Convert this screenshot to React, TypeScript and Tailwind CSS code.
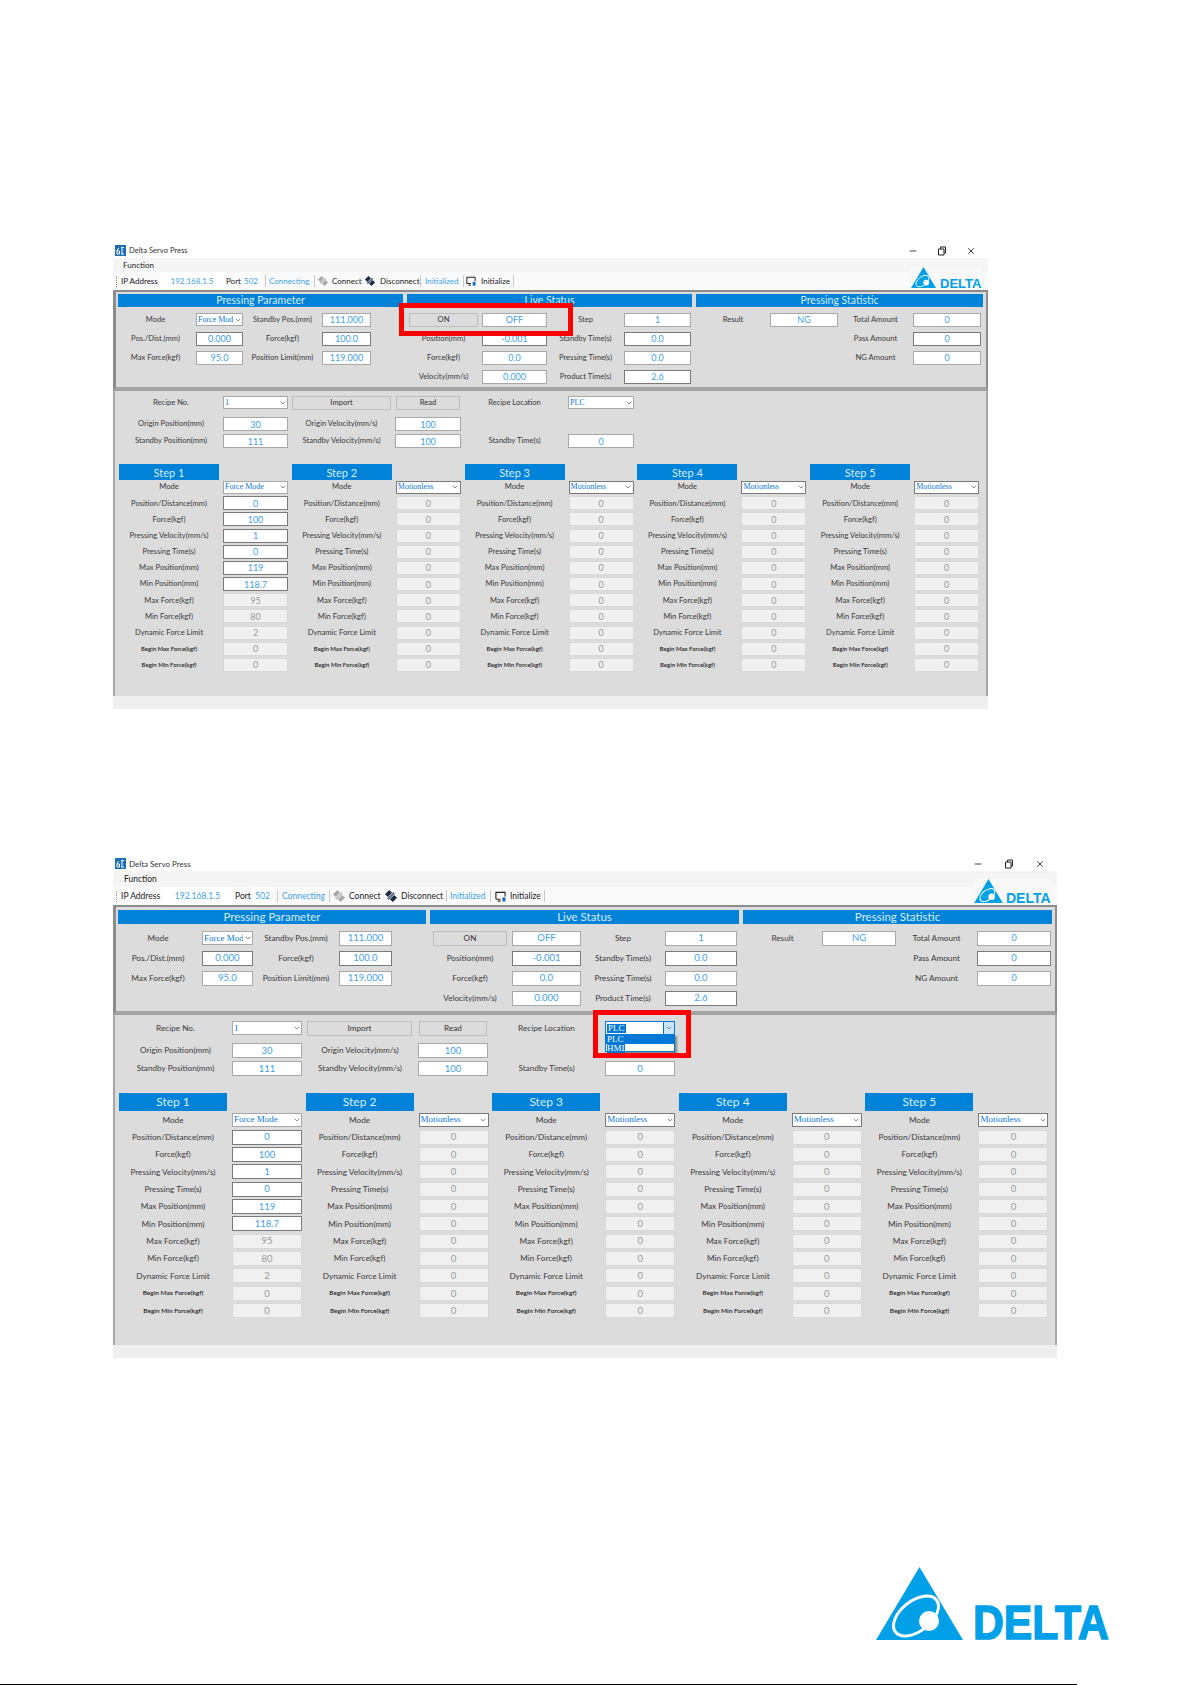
import React from 'react';
import { ChevronDown, Minus, X } from 'lucide-react';

const SM = {
  win: 'w-[875px]',
  title: 'h-[15px] text-[7.6px]',
  controls: 'gap-[19px]',
  menu: 'h-[14px] pl-[10px] text-[8px]',
  bar: 'h-[18px] text-[8px]',
  ipLabel: 'w-[39px]',
  ipBox: 'w-[64px]',
  portLabel: 'w-[19px] pl-[2px]',
  portBox: 'w-[16px]',
  sep0: 'ml-[6px]',
  connecting: 'w-[48px] pl-[3px]',
  icon1: 'ml-[3px] w-[10px] h-[10px]',
  connect: 'w-[37px] pl-[4px]',
  icon2: 'w-[10px] h-[10px]',
  disconnect: 'w-[45px] pl-[5px]',
  initialized: 'w-[42px] pl-[4px]',
  icon3: 'ml-[2px] w-[10px] h-[10px]',
  initialize: 'w-[37px] pl-[5px]',
  logo: 'right-[6px] top-[24px] bg-[#f8f8f8]',
  logoTri: 'w-[27px] h-[21px]',
  logoText: 'text-[13px] w-[42px] ml-[3px] h-[10px]',
  top: 'h-[101px] pt-[2px]',
  groups: 'gap-[4px]',
  g1: 'w-[285px]',
  g2: 'w-[285px]',
  g3: 'w-[287px]',
  head: 'h-[13px] text-[10.5px]',
  topRows: 'auto-rows-[19px] pt-[3px]',
  g1Cols: 'grid-cols-[78px_47px_79px_49px]',
  g2Cols: 'pl-[2px] grid-cols-[73px_65px_77px_67px]',
  g3Cols: 'grid-cols-[74px_68px_75px_68px]',
  g1Pad: 'pr-[3px]',
  g2Pad: 'pr-[4px]',
  onBtn: 'w-[69px]',
  lower: 'h-[305px] pt-[5px]',
  recipe: 'grid-cols-[104px_65px_107px_66px_107px_66px] grid-rows-[21px_17px_15px] mb-[15px]',
  importBtn: 'ml-[4px] mr-[4px]',
  readBtn: 'mx-[1px]',
  steps: 'w-[864px]',
  stepHead: 'w-[100px] h-[16px] text-[11px] -mb-[1px]',
  stepCols: 'grid-cols-[104px_65px] auto-rows-[16.18px]',
  stepLabel: 'pr-[4px]',
  label: 'text-[7.6px]',
  tiny: 'text-[6px]',
  value: 'text-[9px]',
  field: 'h-[14px]',
  select: 'h-[13px] text-[8px]',
  red: 'left-[286px] top-[60px] w-[174px] h-[33px]',
};

const LG: typeof SM = {
  win: 'w-[944px]',
  title: 'h-[15px] text-[8px]',
  controls: 'gap-[21px]',
  menu: 'h-[16px] pl-[11px] text-[8.5px]',
  bar: 'h-[18px] text-[8.5px]',
  ipLabel: 'w-[42px]',
  ipBox: 'w-[69px]',
  portLabel: 'w-[21px] pl-[3px]',
  portBox: 'w-[19px]',
  sep0: 'ml-[5px]',
  connecting: 'w-[51px] pl-[4px]',
  icon1: 'ml-[3px] w-[12px] h-[12px]',
  connect: 'w-[40px] pl-[4px]',
  icon2: 'w-[12px] h-[12px]',
  disconnect: 'w-[49px] pl-[4px]',
  initialized: 'w-[43px] pl-[3px]',
  icon3: 'ml-[4px] w-[11px] h-[11px]',
  initialize: 'w-[38px] pl-[4px]',
  logo: 'right-[5px] top-[23px] bg-[#f8f8f8]',
  logoTri: 'w-[29px] h-[24px]',
  logoText: 'text-[14px] w-[46px] ml-[3px] h-[11px]',
  top: 'h-[110px] pt-[3px]',
  groups: 'gap-[4px]',
  g1: 'w-[308px]',
  g2: 'w-[309px]',
  g3: 'w-[309px]',
  head: 'h-[14px] text-[11.5px]',
  topRows: 'auto-rows-[20px] pt-[4px]',
  g1Cols: 'grid-cols-[84px_51px_86px_53px]',
  g2Cols: 'pl-[3px] grid-cols-[79px_69px_84px_72px]',
  g3Cols: 'grid-cols-[79px_74px_81px_74px]',
  g1Pad: 'pr-[4px]',
  g2Pad: 'pr-[5px]',
  onBtn: 'w-[74px]',
  lower: 'h-[330px] pt-[6px]',
  recipe: 'grid-cols-[113px_70px_116px_70px_117px_70px] grid-rows-[22px_18px_16px] mb-[16px]',
  importBtn: 'ml-[5px] mr-[6px]',
  readBtn: 'mx-[1px]',
  steps: 'w-[933px]',
  stepHead: 'w-[108px] h-[18px] text-[12px] mb-0',
  stepCols: 'grid-cols-[113px_70px] auto-rows-[17.36px]',
  stepLabel: 'pr-[5px]',
  label: 'text-[8.2px]',
  tiny: 'text-[6.5px]',
  value: 'text-[9.5px]',
  field: 'h-[15px]',
  select: 'h-[14px] text-[9px]',
  red: 'left-[480px] top-[154px] w-[98px] h-[48px]',
};

type Size = typeof SM;

const STEP_LABELS = [
  'Position/Distance(mm)',
  'Force(kgf)',
  'Pressing Velocity(mm/s)',
  'Pressing Time(s)',
  'Max Position(mm)',
  'Min Position(mm)',
  'Max Force(kgf)',
  'Min Force(kgf)',
  'Dynamic Force Limit',
  'Begin Max Force(kgf)',
  'Begin Min Force(kgf)',
];
const STEP1_VALUES = ['0', '100', '1', '0', '119', '118.7', '95', '80', '2', '0', '0'];

const Triangle = ({ className }: { className: string }) => (
  <svg viewBox="0 0 87 73" className={className}>
    <path d="M43.5 0 87 73H0Z" fill="#00a0e9" />
    <ellipse cx="40" cy="49" rx="26" ry="15" transform="rotate(-38 40 49)" fill="none" stroke="#fff" strokeWidth="3" />
    <circle cx="53" cy="54" r="10" fill="#fff" />
  </svg>
);

const AppIcon = () => (
  <svg viewBox="0 0 11 11" className="w-[11px] h-[11px] shrink-0">
    <rect width="11" height="11" fill="#1c6fb8" />
    <path d="M2 9V5l2-2M2 6h2.5v3H2M6 9h3M6 2.5h3M7 2.5V9" stroke="#fff" strokeWidth="1" fill="none" />
  </svg>
);

const PlugIcon = ({ className, color }: { className: string; color: string }) => (
  <svg viewBox="0 0 12 12" className={`${className} shrink-0`}>
    <g transform="rotate(-45 6 6)" fill={color}>
      <rect x="3" y="0.5" width="6" height="4" />
      <rect x="3" y="7.5" width="6" height="4" />
      <rect x="1.5" y="5" width="9" height="2" opacity="0.7" />
    </g>
  </svg>
);

const ScreenIcon = ({ className }: { className: string }) => (
  <svg viewBox="0 0 12 12" className={`${className} shrink-0`}>
    <path d="M1 9V1.5h10V6M1 9h5M3 11h3" stroke="#222" strokeWidth="1.2" fill="none" />
    <rect x="8" y="7" width="3.5" height="4.5" fill="#1c6fb8" />
  </svg>
);

const Restore = () => (
  <svg viewBox="0 0 10 10" className="w-[10px] h-[10px]">
    <path d="M1.5 3h5.5v6H1.5zM3.5 3V1h5v6H7" fill="none" stroke="#222" strokeWidth="1" />
  </svg>
);

const Sep = ({ className = '' }: { className?: string }) => <span className={`w-px h-[12px] bg-[#c8c8c8] shrink-0 ${className}`} />;

const Label = ({ s, children, className = '', tiny = false }: { s: Size; children: React.ReactNode; className?: string; tiny?: boolean }) => (
  <span className={`text-center whitespace-nowrap ${tiny ? `${s.tiny} text-[#222] font-semibold` : `${s.label} text-[#3a3a3a]`} ${className}`}>{children}</span>
);

const Field = ({ s, value, dark = false, disabled = false }: { s: Size; value: string; dark?: boolean; disabled?: boolean }) => (
  <div
    className={`${s.field} ${s.value} flex items-center justify-center border leading-none ${
      disabled ? 'bg-[#f0f0f0] border-[#d8d8d8] text-[#9a9a9a]' : `bg-white text-[#3f9fe8] ${dark ? 'border-[#7a7a7a]' : 'border-[#a8a8a8]'}`
    }`}
  >
    {value}
  </div>
);

const Select = ({ s, value, dark = false, open = false }: { s: Size; value: string; dark?: boolean; open?: boolean }) => (
  <div
    className={`${s.select} relative flex items-center bg-white border font-['Liberation_Serif',serif] text-[#0a78d6] ${
      open ? 'border-[#0078d7]' : dark ? 'border-[#7a7a7a]' : 'border-[#a8a8a8]'
    }`}
  >
    <span className="flex-1 min-w-0 overflow-hidden whitespace-nowrap pl-[1px] leading-none">
      {open ? <span className="bg-[#0078d7] text-white px-[1px]">{value}</span> : value}
    </span>
    <span className={`flex items-center justify-center h-full shrink-0 ${open ? 'w-[11px] bg-[#cce4f7] border-l border-[#0078d7]' : 'w-[9px]'}`}>
      <ChevronDown size={8} color="#555" />
    </span>
    {open && (
      <div className="absolute left-[-1px] right-[-1px] top-full h-[18px] bg-white border border-[#0078d7] shadow-[2px_2px_2px_rgba(0,0,0,0.4)] leading-none z-10">
        <div className="h-[9px] bg-[#0078d7] text-white pl-[1px]">PLC</div>
        <div className="pl-[1px]">
          <span className="bg-[#0078d7] text-white">HMI</span>
        </div>
      </div>
    )}
  </div>
);

const Btn = ({ s, children, className = '' }: { s: Size; children: React.ReactNode; className?: string }) => (
  <div className={`${s.field} ${s.label} flex items-center justify-center bg-[#dcdcdc] border border-[#bcbcbc] text-[#333] ${className}`}>{children}</div>
);

const Head = ({ s, children, className = '' }: { s: Size; children: React.ReactNode; className?: string }) => (
  <div className={`${s.head} flex items-center justify-center bg-[#0082d9] text-[#d8eefc] leading-none ${className}`}>{children}</div>
);

const RecipeLabel = ({ s, children }: { s: Size; children: React.ReactNode }) => (
  <Label s={s} className={`${s.field} flex items-center justify-center`}>{children}</Label>
);

const Step = ({ s, n, mode }: { s: Size; n: number; mode: string }) => (
  <div>
    <Head s={s} className={s.stepHead}>{`Step ${n}`}</Head>
    <div className={`grid items-center ${s.stepCols}`}>
      <Label s={s} className={s.stepLabel}>Mode</Label>
      <Select s={s} value={mode} dark={n > 1} />
      {STEP_LABELS.map((label, i) => (
        <React.Fragment key={label}>
          <Label s={s} tiny={i > 8} className={s.stepLabel}>{label}</Label>
          {n === 1 ? (
            <Field s={s} value={STEP1_VALUES[i]} dark={i < 6} disabled={i >= 6} />
          ) : (
            <Field s={s} value="0" disabled />
          )}
        </React.Fragment>
      ))}
    </div>
  </div>
);

const Window = ({ s, open = false }: { s: Size; open?: boolean }) => (
  <div className={`${s.win} relative ml-[113px] font-['Lato',sans-serif]`}>
    {/* Title bar */}
    <div className={`${s.title} flex items-center justify-between bg-white pl-[2px] pr-[12px] text-[#333]`}>
      <div className="flex items-center gap-[3px]">
        <AppIcon />
        <span>Delta Servo Press</span>
      </div>
      <div className={`flex items-center ${s.controls}`}>
        <Minus size={10} color="#222" />
        <Restore />
        <X size={10} color="#222" />
      </div>
    </div>

    <div className={`${s.menu} flex items-center bg-[#f5f5f5] text-[#222]`}>Function</div>

    {/* Toolbar */}
    <div className={`${s.bar} flex items-center bg-[#fafafa] text-[#222] whitespace-nowrap`}>
      <span className="ml-[3px] mr-[4px] h-[11px] border-l border-dotted border-[#888]" />
      <span className={s.ipLabel}>IP Address</span>
      <span className={`${s.ipBox} h-full flex items-center justify-center bg-white text-[#3f9fe8]`}>192.168.1.5</span>
      <span className={s.portLabel}>Port</span>
      <span className={`${s.portBox} h-full flex items-center justify-center bg-white text-[#3f9fe8]`}>502</span>
      <Sep className={s.sep0} />
      <span className={`${s.connecting} text-[#3f9fe8]`}>Connecting</span>
      <Sep />
      <PlugIcon className={s.icon1} color="#a8a8a8" />
      <span className={s.connect}>Connect</span>
      <PlugIcon className={s.icon2} color="#1a2a44" />
      <span className={s.disconnect}>Disconnect</span>
      <Sep />
      <span className={`${s.initialized} text-[#3f9fe8]`}>Initialized</span>
      <Sep />
      <ScreenIcon className={s.icon3} />
      <span className={s.initialize}>Initialize</span>
      <Sep />
    </div>

    <div className={`${s.logo} absolute flex items-end`}>
      <Triangle className={s.logoTri} />
      <span className={`${s.logoText} flex items-center font-['Liberation_Sans',sans-serif] font-bold text-[#00a0e9] leading-none`}>DELTA</span>
    </div>

    {/* Pressing parameter / live status / statistic */}
    <div className={`${s.top} bg-[#dcdcdc] border-l-[3px] border-r-[2px] border-t-2 border-b-4 border-l-[#8c8c8c] border-r-[#8c8c8c] border-t-[#8c8c8c] border-b-[#a3a3a3] pl-[2px]`}>
      <div className={`flex ${s.groups}`}>
        <div className={s.g1}>
          <Head s={s}>Pressing Parameter</Head>
          <div className={`grid items-center ${s.topRows} ${s.g1Cols}`}>
            <Label s={s} className={s.g1Pad}>Mode</Label>
            <Select s={s} value="Force Mod" />
            <Label s={s}>Standby Pos.(mm)</Label>
            <Field s={s} value="111.000" />
            <Label s={s} className={s.g1Pad}>Pos./Dist.(mm)</Label>
            <Field s={s} value="0.000" dark />
            <Label s={s}>Force(kgf)</Label>
            <Field s={s} value="100.0" dark />
            <Label s={s} className={s.g1Pad}>Max Force(kgf)</Label>
            <Field s={s} value="95.0" />
            <Label s={s}>Position Limit(mm)</Label>
            <Field s={s} value="119.000" />
          </div>
        </div>
        <div className={s.g2}>
          <Head s={s}>Live Status</Head>
          <div className={`grid items-center ${s.topRows} ${s.g2Cols}`}>
            <Btn s={s} className={s.onBtn}>ON</Btn>
            <Field s={s} value="OFF" />
            <Label s={s}>Step</Label>
            <Field s={s} value="1" />
            <Label s={s} className={s.g2Pad}>Position(mm)</Label>
            <Field s={s} value="-0.001" dark />
            <Label s={s}>Standby Time(s)</Label>
            <Field s={s} value="0.0" dark />
            <Label s={s} className={s.g2Pad}>Force(kgf)</Label>
            <Field s={s} value="0.0" />
            <Label s={s}>Pressing Time(s)</Label>
            <Field s={s} value="0.0" />
            <Label s={s} className={s.g2Pad}>Velocity(mm/s)</Label>
            <Field s={s} value="0.000" />
            <Label s={s}>Product Time(s)</Label>
            <Field s={s} value="2.6" dark />
          </div>
        </div>
        <div className={s.g3}>
          <Head s={s}>Pressing Statistic</Head>
          <div className={`grid items-center ${s.topRows} ${s.g3Cols}`}>
            <Label s={s}>Result</Label>
            <Field s={s} value="NG" />
            <Label s={s}>Total Amount</Label>
            <Field s={s} value="0" />
            <span />
            <span />
            <Label s={s}>Pass Amount</Label>
            <Field s={s} value="0" dark />
            <span />
            <span />
            <Label s={s}>NG Amount</Label>
            <Field s={s} value="0" />
          </div>
        </div>
      </div>
    </div>

    {/* Recipe + steps */}
    <div className={`${s.lower} bg-[#dcdcdc] border-x-2 border-x-[#a8a8a8] pl-[4px]`}>
      <div className={`grid items-start ${s.recipe}`}>
        <RecipeLabel s={s}>Recipe No.</RecipeLabel>
        <Select s={s} value="1" />
        <Btn s={s} className={s.importBtn}>Import</Btn>
        <Btn s={s} className={s.readBtn}>Read</Btn>
        <RecipeLabel s={s}>Recipe Location</RecipeLabel>
        <Select s={s} value="PLC" open={open} />

        <RecipeLabel s={s}>Origin Position(mm)</RecipeLabel>
        <Field s={s} value="30" />
        <RecipeLabel s={s}>Origin Velocity(mm/s)</RecipeLabel>
        <Field s={s} value="100" />
        <span />
        <span />

        <RecipeLabel s={s}>Standby Position(mm)</RecipeLabel>
        <Field s={s} value="111" />
        <RecipeLabel s={s}>Standby Velocity(mm/s)</RecipeLabel>
        <Field s={s} value="100" />
        <RecipeLabel s={s}>Standby Time(s)</RecipeLabel>
        <Field s={s} value="0" />
      </div>
      <div className={`grid grid-cols-5 ${s.steps}`}>
        {[1, 2, 3, 4, 5].map((n) => (
          <Step key={n} s={s} n={n} mode={n === 1 ? 'Force Mode' : 'Motionless'} />
        ))}
      </div>
    </div>

    <div className="h-[13px] bg-[#efefef]" />

    {/* Highlight from the manual */}
    <div className={`${s.red} absolute border-[5px] border-[#ff0000] z-20`} />
  </div>
);

export default function App() {
  return (
    <div className="w-[1192px] h-[1685px] bg-white pt-[243px] overflow-hidden">
      <Window s={SM} />
      <div className="mt-[147px]">
        <Window s={LG} open />
      </div>
      {/* Footer logo */}
      <div className="mt-[209px] flex justify-end items-end pr-[82px]">
        <Triangle className="w-[87px] h-[73px]" />
        <span className="ml-[10px] w-[137px] h-[35px] flex items-center font-['Liberation_Sans',sans-serif] font-bold text-[49px] leading-none text-[#00a0e9] origin-left scale-x-[0.87] [-webkit-text-stroke:1.5px_#00a0e9]">
          DELTA
        </span>
      </div>
      <div className="mt-[44px] w-[1077px] h-px bg-black" />
    </div>
  );
}
